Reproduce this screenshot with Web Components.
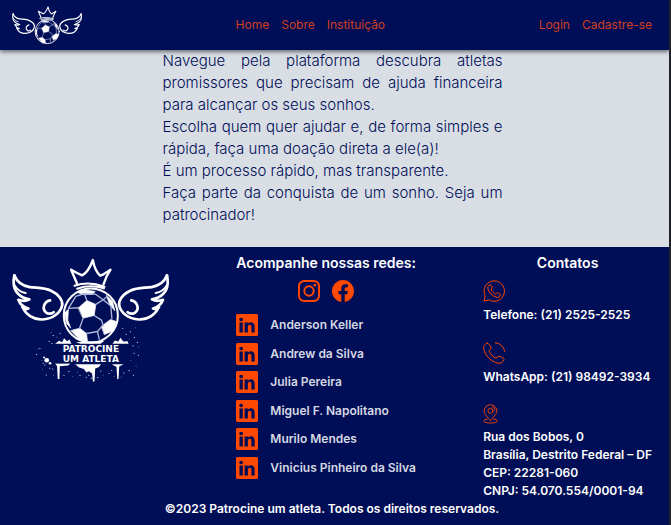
<!DOCTYPE html>
<html lang="pt-BR">
<head>
<meta charset="utf-8">
<meta name="viewport" content="width=device-width, initial-scale=1">
<title>Patrocine um Atleta</title>
<style>
  :root { --navy: #000e57; --orange: #ff4800; --nav-link: #d0401f; --page: #d9dee5; }
  html { background: #212225; }
  body { margin: 0 2px 0 0; background: var(--page); font-family: Inter, "Liberation Sans", sans-serif; color: #fff; }
</style>
</head>
<body>
<site-header></site-header>
<intro-text></intro-text>
<site-footer></site-footer>

<template id="logo-template">
  <style>
    :host { display: block; }
    svg { display: block; width: 100%; height: auto; }
    text { font: bold 27px "DejaVu Sans", sans-serif; fill: #fff; text-anchor: middle; }
  </style>
  <svg viewBox="35 40 470 262" role="img" aria-label="Patrocine um Atleta" fill="none" stroke="#fff" stroke-linecap="round" stroke-linejoin="round">
    <defs>
      <g id="wing">
        <path stroke-width="8" d="M42 92C50 112 66 124 88 127C112 130 132 128 152 138C176 149 188 168 185 182C180 204 158 222 126 224C98 225 76 208 68 189"/>
        <path stroke-width="8" d="M42 92C38 112 40 134 53 147C62 156 75 162 87 164C76 170 65 169 54 165C58 176 68 187 84 191C77 194 70 192 66 187"/>
        <path stroke-width="6" d="M43 122C50 134 62 142 76 145"/>
        <path stroke-width="8" d="M149 167C130 171 124 193 137 203C143 208 154 208 160 202"/>
      </g>
    </defs>
    <use href="#wing"/>
    <use href="#wing" transform="translate(541 0) scale(-1 1)"/>
    <path stroke-width="7" d="M230 117L212 75C224 82 234 87 245 92C259 85 269 68 277 46C281 68 288 83 299 93C309 90 319 82 330 75C321 88 314 103 309 119"/>
    <path stroke-width="6" d="M222 123C250 114 285 116 312 126M230 132C255 123 285 123 310 131"/>
    <circle cx="271" cy="212" r="81" stroke-width="6"/>
    <g fill="#fff" stroke-width="2">
      <path d="M234 189L259 167L286 179L281 212L248 220Z"/>
      <path d="M303 244L330 224L347 230L338 258L312 269Z"/>
      <path d="M212 257L238 250L258 266L261 290L237 285Z"/>
      <path d="M232 143L252 135L284 140L276 149L248 149Z"/>
      <path d="M192 205L204 193L202 226L211 250L198 235Z"/>
      <path d="M318 153L336 170L343 198L328 181Z"/>
    </g>
    <path stroke="#aeb7dc" stroke-width="4" d="M259 167L252 148M286 179L308 165L319 156M234 189L204 191M281 212L303 226L308 243M248 220L237 251M308 165L331 184L334 222M258 266L291 260L305 244M204 191L226 155L250 147L284 148L308 165M291 260L296 283"/>
    <g class="wordmark">
      <g stroke="none" fill="#fff">
        <path d="M164 297L176 288L185 292L191 280L200 289L207 284L213 297ZM336 297L343 287L353 290L360 279L368 290L381 289L384 297ZM226 292L312 288L300 297L240 297Z"/>
        <path d="M164 356H210L203 362L178 364L177 402L172 402L170 364ZM224 358H302L294 367L284 371L282 410L277 410L275 386L265 379L258 383L250 372L236 368ZM334 358H369L356 365L354 402L350 402L348 366Z"/>
        <circle cx="139" cy="346" r="7"/><circle cx="149" cy="355" r="4"/><circle cx="131" cy="338" r="3"/>
      </g>
      <path stroke-width="3" opacity=".8" d="M128 355h1M118 311h1M108 329h1M146 290h1M158 272h1M179 265h1M366 250h1M389 261h1M401 278h1M410 293h1M397 303h1M400 325h1M413 331h1M147 370h1M137 390h1M156 372h1M205 380h1M238 391h1M257 397h1M272 400h1M300 378h1M325 385h1M333 377h1M369 384h1M385 377h1M398 391h1M190 391h1M376 268h1M154 296h1M133 360h1M264 391h1M291 398h1"/>
      <path stroke-width="2" opacity=".5" d="M112 312h1M124 347h1M169 277h1M152 263h1M404 249h1M385 283h1M413 306h1M390 347h1M406 364h1M215 395h1M230 382h1M307 391h1M340 395h1M361 397h1M159 391h1M126 374h1"/>
      <path fill="#000e57" stroke="none" d="M155 298h233v57H155z"/>
      <text x="271" y="320" stroke="none">PATROCINE</text>
      <text x="271" y="351" stroke="none">UM ATLETA</text>
    </g>
  </svg>
</template>

<template id="icon-template">
  <style>
    :host { display: block; width: 22px; height: 22px; color: var(--orange); }
    :host([name="pin"]) { width: 15px; height: 20px; }
    svg { display: block; width: 100%; height: 100%; overflow: visible; }
  </style>
</template>

<template id="header-template">
  <style>
    :host { display: block; position: relative; background: var(--navy); box-shadow: 0 2px 4px rgba(0, 0, 0, .5); }
    header { display: flex; justify-content: space-between; align-items: center; padding: 6px 17px 6px 12px; column-gap: 12px; }
    team-logo { width: 70px; margin-bottom: -1px; }
    nav { display: flex; gap: 12px; }
    a { color: var(--nav-link); font-size: 12px; line-height: 20px; text-decoration: none; }
  </style>
  <header>
    <a href="#" aria-label="Início"><team-logo></team-logo></a>
    <nav><a href="#">Home</a><a href="#sobre">Sobre</a><a href="#inst">Instituição</a></nav>
    <nav><a href="#login">Login</a><a href="#cadastro">Cadastre-se</a></nav>
  </header>
</template>

<template id="intro-template">
  <style>
    :host { display: block; padding: 0 24px 21px 20px; }
    section { max-width: 340px; margin: 0 auto; color: var(--navy); font-size: 15px; font-weight: 300; line-height: 22px; text-align: justify; }
    p { margin: 0; }
  </style>
  <section>
    <p>Navegue pela plataforma descubra atletas promissores que precisam de ajuda financeira para alcançar os seus sonhos.</p>
    <p>Escolha quem quer ajudar e, de forma simples e rápida, faça uma doação direta a ele(a)!</p>
    <p>É um processo rápido, mas transparente.</p>
    <p>Faça parte da conquista de um sonho. Seja um patrocinador!</p>
  </section>
</template>

<template id="person-template">
  <style>
    :host { display: block; }
    a { display: flex; align-items: center; gap: 12px; color: #d5d8e2; font-size: 12px; font-weight: 600; line-height: 22px; text-decoration: none; }
  </style>
  <a href="#linkedin"><ui-icon name="linkedin"></ui-icon><slot></slot></a>
</template>

<template id="contact-template">
  <style>
    :host { display: block; font-size: 12px; font-weight: 600; line-height: 18px; }
    .text { margin-top: 4px; }
  </style>
  <ui-icon></ui-icon>
  <div class="text"><slot></slot></div>
</template>

<template id="footer-template">
  <style>
    :host { display: block; background: var(--navy); border-bottom: 1px solid #4c5687; }
    .columns { display: grid; grid-template-columns: auto auto auto; justify-content: space-between; padding: 7px 17px 0 12px; }
    .brand { width: 157px; padding-top: 4px; }
    h2 { margin: 0; font-size: 14px; line-height: 18px; font-weight: 600; text-align: center; }
    .social { display: flex; justify-content: center; gap: 12px; margin: 8px 0 12px; }
    .people { display: flex; flex-direction: column; justify-content: space-between; height: 165px; }
    address { display: flex; flex-direction: column; gap: 18px; margin-top: 8px; font-style: normal; }
    .rights { margin: 0; padding: 0 5px 7px 0; text-align: center; font-size: 12px; line-height: 18px; font-weight: 600; }
  </style>
  <footer>
    <div class="columns">
      <team-logo class="brand" wordmark></team-logo>
      <section>
        <h2>Acompanhe nossas redes:</h2>
        <div class="social">
          <a href="#instagram" aria-label="Instagram"><ui-icon name="instagram"></ui-icon></a>
          <a href="#facebook" aria-label="Facebook"><ui-icon name="facebook"></ui-icon></a>
        </div>
        <div class="people">
          <person-link>Anderson Keller</person-link>
          <person-link>Andrew da Silva</person-link>
          <person-link>Julia Pereira</person-link>
          <person-link>Miguel F. Napolitano</person-link>
          <person-link>Murilo Mendes</person-link>
          <person-link>Vinicius Pinheiro da Silva</person-link>
        </div>
      </section>
      <section>
        <h2>Contatos</h2>
        <address>
          <contact-item icon="whatsapp">Telefone: (21) 2525-2525</contact-item>
          <contact-item icon="phone">WhatsApp: (21) 98492-3934</contact-item>
          <contact-item icon="pin">Rua dos Bobos, 0<br>Brasília, Destrito Federal – DF<br>CEP: 22281-060<br>CNPJ: 54.070.554/0001-94</contact-item>
        </address>
      </section>
    </div>
    <p class="rights">©2023 Patrocine um atleta. Todos os direitos reservados.</p>
  </footer>
</template>

<script>
const ICONS = {
  linkedin: '<svg viewBox="0 0 16 16" fill="currentColor"><path d="M0 1.146C0 .513.526 0 1.175 0h13.65C15.474 0 16 .513 16 1.146v13.708c0 .633-.526 1.146-1.175 1.146H1.175C.526 16 0 15.487 0 14.854V1.146zm4.943 12.248V6.169H2.542v7.225h2.401zm-1.2-8.212c.837 0 1.358-.554 1.358-1.248-.015-.709-.52-1.248-1.342-1.248-.822 0-1.359.54-1.359 1.248 0 .694.521 1.248 1.327 1.248h.016zm4.908 8.212V9.359c0-.216.016-.432.08-.586.173-.431.568-.878 1.232-.878.869 0 1.216.662 1.216 1.634v3.865h2.401V9.25c0-2.22-1.184-3.252-2.764-3.252-1.274 0-1.845.7-2.165 1.193v.025h-.016l.016-.025V6.169h-2.4c.03.678 0 7.225 0 7.225h2.4z"/></svg>',
  facebook: '<svg viewBox="0 0 16 16" fill="currentColor"><path d="M16 8.049c0-4.446-3.582-8.05-8-8.05C3.58 0-.002 3.603-.002 8.05c0 4.017 2.926 7.347 6.75 7.951v-5.625h-2.03V8.05H6.75V6.275c0-2.017 1.195-3.131 3.022-3.131.876 0 1.791.157 1.791.157v1.98h-1.009c-.993 0-1.303.621-1.303 1.258v1.51h2.218l-.354 2.326H9.25V16c3.824-.604 6.75-3.934 6.75-7.951z"/></svg>',
  instagram: '<svg viewBox="0 0 16 16" fill="none" stroke="currentColor" stroke-width="1.44"><rect x=".72" y=".72" width="14.56" height="14.56" rx="3.8"/><circle cx="8" cy="8" r="3.4"/><circle cx="12.27" cy="3.73" r=".96" fill="currentColor" stroke="none"/></svg>',
  whatsapp: '<svg viewBox="0 0 22 22" fill="none" stroke="currentColor" stroke-width="1" stroke-linejoin="round"><path d="M1 21L2.2 15.8A10.2 10.2 0 1 1 6.3 20Z"/><path d="M7 4.8C5 5.3 4.3 7.4 5.2 9.5C6.6 13 9.4 16 13.2 17.2C15.4 17.9 17.3 16.7 17.4 14.8C17.5 13.8 15.6 12.9 14.5 12.8C13.6 12.8 13.3 14 12.5 14C10.8 13.2 9.3 11.8 8.3 10C8.2 9.1 9.3 8.8 9.1 7.8C8.9 6.8 8.3 4.8 7 4.8Z"/></svg>',
  phone: '<svg viewBox="0 0 22 22" fill="none" stroke="currentColor" stroke-width="1" stroke-linejoin="round" stroke-linecap="round"><path d="M4.4 1.1C1.6 1.9 .1 4.3 .8 7.3C2.4 13.8 8.2 19.8 14.8 21.2C17.8 21.8 20.4 20.2 21 17.5C20.8 16.2 17.2 14 15.8 14.2C14.4 14.4 14.2 16 13 16.2C10.4 15.3 7.2 12.2 6.1 9.2C6.2 7.9 7.9 7.6 8.1 6.3C8.3 5 5.8 1.2 4.4 1.1Z"/><path d="M12.3.7A9.8 9.8 0 0 1 21.6 9.4"/></svg>',
  pin: '<svg viewBox="0 0 16 22" fill="none" stroke="currentColor" stroke-width="1" stroke-linejoin="round" stroke-linecap="round"><path d="M8 18.2C5.5 14.7 1 11.4 1 7.8A7 7 0 0 1 15 7.8C15 11.4 10.5 14.7 8 18.2Z"/><circle cx="8" cy="7.5" r="2.8"/><path d="M10 2.8Q12.5 3.8 13 6.5"/><path d="M4.7 16.5C2.5 16.8.6 17.5.6 18.6C.6 20 4 20.9 8 20.9S15.4 20 15.4 18.6C15.4 17.5 13.5 16.8 11.3 16.5"/></svg>'
};

const stamp = (host, id) => {
  const root = host.attachShadow({ mode: "open" });
  root.append(document.getElementById(id).content.cloneNode(true));
  return root;
};

customElements.define("ui-icon", class extends HTMLElement {
  static observedAttributes = ["name"];
  constructor() { super(); stamp(this, "icon-template"); }
  attributeChangedCallback(_, __, name) {
    this.shadowRoot.querySelector("svg")?.remove();
    this.shadowRoot.querySelector("style").insertAdjacentHTML("afterend", ICONS[name] || "");
  }
});

customElements.define("team-logo", class extends HTMLElement {
  connectedCallback() {
    if (this.shadowRoot) return;
    const root = stamp(this, "logo-template");
    if (this.hasAttribute("wordmark")) root.querySelector("svg").setAttribute("viewBox", "35 40 470 375");
    else root.querySelector(".wordmark").remove();
  }
});

customElements.define("person-link", class extends HTMLElement {
  constructor() { super(); stamp(this, "person-template"); }
});

customElements.define("contact-item", class extends HTMLElement {
  connectedCallback() {
    if (this.shadowRoot) return;
    stamp(this, "contact-template").querySelector("ui-icon").setAttribute("name", this.getAttribute("icon"));
  }
});

for (const [tag, id] of [["site-header", "header-template"], ["intro-text", "intro-template"], ["site-footer", "footer-template"]]) {
  customElements.define(tag, class extends HTMLElement {
    constructor() { super(); stamp(this, id); }
  });
}
</script>
</body>
</html>
